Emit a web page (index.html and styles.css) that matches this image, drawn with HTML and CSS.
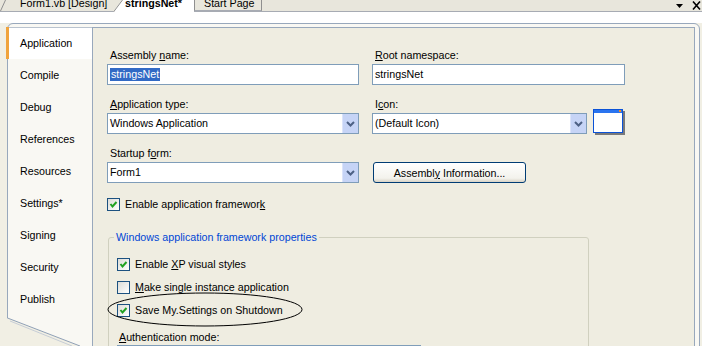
FILE: index.html
```html
<!DOCTYPE html>
<html lang="en">
<head>
  <meta charset="UTF-8">
  <title>stringsNet - Application</title>
  <link rel="stylesheet" href="styles.css">
</head>
<body>

  <div class="docbar">
    <span class="slant lead"><svg width="6" height="12"><path d="M0.5 11 L5.5 0" stroke="#8f8f8f" fill="none"/></svg></span>
    <div class="doctab design">Form1.vb [Design]</div>
    <span class="slant"><svg width="10" height="12"><path d="M0 12 L9 0 L10 0 L10 12Z" fill="#fff"/><path d="M0.5 12 L9.5 0" stroke="#8f8f8f" fill="none"/></svg></span>
    <div class="doctab active">stringsNet*</div>
    <div class="doctab start">Start Page</div>
    <div class="docbtns">
      <svg width="28" height="10">
        <path d="M2 3 L9 3 L5.5 7Z" fill="#000"/>
        <path d="M19 0.5 L26 8.5 M26 0.5 L19 8.5" stroke="#000" stroke-width="1.6" fill="none"/>
      </svg>
    </div>
  </div>
  <div class="strip"></div>

  <div class="frame">
    <ul class="sidetabs">
      <li class="sel">Application</li>
      <li>Compile</li>
      <li>Debug</li>
      <li>References</li>
      <li>Resources</li>
      <li>Settings*</li>
      <li>Signing</li>
      <li>Security</li>
      <li>Publish</li>
    </ul>

    <div class="panel">
      <div class="grid">
        <div class="field">
          <div class="label">Assembly <u>n</u>ame:</div>
          <div class="textbox"><span class="picked">stringsNet</span></div>
        </div>
        <div class="field">
          <div class="label"><u>R</u>oot namespace:</div>
          <div class="textbox">stringsNet</div>
        </div>

        <div class="field">
          <div class="label"><u>A</u>pplication type:</div>
          <div class="combo"><span class="value">Windows Application</span><span class="drop"><svg width="9" height="6"><path d="M1 1 L4.5 4.5 L8 1" stroke="#4d6185" stroke-width="2" fill="none"/></svg></span></div>
        </div>
        <div class="field">
          <div class="label">I<u>c</u>on:</div>
          <div class="iconrow">
            <div class="combo short"><span class="value">(Default Icon)</span><span class="drop"><svg width="9" height="6"><path d="M1 1 L4.5 4.5 L8 1" stroke="#4d6185" stroke-width="2" fill="none"/></svg></span></div>
            <svg class="preview" width="32" height="26">
              <rect x="2" y="2" width="30" height="24" fill="#7a7a7a"/>
              <rect x="0.5" y="0.5" width="29" height="23" fill="#fff" stroke="#0b52d6"/>
              <rect x="1" y="1" width="28" height="3" fill="#2a74ef"/>
              <rect x="26" y="1" width="2" height="2" fill="#f28c28"/>
            </svg>
          </div>
        </div>

        <div class="field">
          <div class="label">Startup f<u>o</u>rm:</div>
          <div class="combo"><span class="value">Form1</span><span class="drop"><svg width="9" height="6"><path d="M1 1 L4.5 4.5 L8 1" stroke="#4d6185" stroke-width="2" fill="none"/></svg></span></div>
        </div>
        <div class="field">
          <div class="label"></div>
          <button class="xpbutton">Assembl<u>y</u> Information...</button>
        </div>
      </div>

      <div class="check framework">
        <span class="box on"><svg width="11" height="11"><path d="M2.5 5 L4.5 7.5 L8.5 3" stroke="#21a121" stroke-width="2" fill="none"/></svg></span>
        <span>Enable application framewor<u>k</u></span>
      </div>

      <fieldset class="group">
        <legend>Windows application framework properties</legend>
        <div class="check">
          <span class="box on"><svg width="11" height="11"><path d="M2.5 5 L4.5 7.5 L8.5 3" stroke="#21a121" stroke-width="2" fill="none"/></svg></span>
          <span>Enable <u>X</u>P visual styles</span>
        </div>
        <div class="check">
          <span class="box"></span>
          <span><u>M</u>ake single instance application</span>
        </div>
        <div class="check">
          <span class="box on"><svg width="11" height="11"><path d="M2.5 5 L4.5 7.5 L8.5 3" stroke="#21a121" stroke-width="2" fill="none"/></svg></span>
          <span>Save My.Settings on Shutdown</span>
        </div>
        <div class="label auth"><u>A</u>uthentication mode:</div>
        <div class="textbox auth-box"></div>
      </fieldset>
    </div>
  </div>

  <!-- hand-drawn ring around the shutdown option -->
  <svg class="ring" width="200" height="38">
    <ellipse cx="99" cy="18.5" rx="97" ry="16.5" fill="none" stroke="#000"/>
  </svg>

  <!-- slanted bottom of the side tab strip -->
  <svg class="corner" width="96" height="30">
    <path d="M0 2 L7 2 L80 30 L0 30Z" fill="#f1efe4"/>
    <path d="M7.5 2 L80 30" stroke="#8fa0b6" fill="none"/>
    <path d="M10 5 L72 30" stroke="#c6cdd6" fill="none"/>
  </svg>

</body>
</html>
```

FILE: styles.css
```css
* {
  box-sizing: border-box;
}

body {
  margin: 0;
  width: 702px;
  height: 346px;
  overflow: hidden;
  position: relative;
  font-family: 'Liberation Sans', Arial, sans-serif;
  font-size: 10.7px;
  color: #000;
  background: #f1efe4;
}

u {
  text-decoration-thickness: 1px;
  text-underline-offset: 1px;
}

/* document tabs */
.docbar {
  height: 12px;
  display: flex;
  align-items: flex-start;
  background: linear-gradient(to top, #a7abb3 1px, #e8e6dc 1px);
  overflow: hidden;
}

.slant {
  height: 12px;
  display: block;
}

.slant svg {
  display: block;
}

.slant.lead {
  width: 6px;
}

.doctab {
  height: 12px;
  line-height: 13px;
  margin-top: -3px;
  white-space: nowrap;
}

.doctab.design {
  width: 107px;
  padding-left: 14px;
}

.doctab.active {
  width: 71px;
  height: 15px;
  background: #fff;
  font-weight: bold;
  padding-left: 2px;
}

.doctab.start {
  width: 68px;
  height: 14px;
  padding-left: 9px;
  border-left: 1px solid #8f8f8f;
  border-right: 1px solid #8f8f8f;
  border-bottom: 1px solid #a7abb3;
}

.docbtns {
  margin-left: auto;
  padding-top: 1px;
}

.docbtns svg {
  display: block;
}

.strip {
  height: 11px;
  background: #fff;
}

/* property page frame */
.frame {
  margin-left: 7px;
  width: 693px;
  height: 340px;
  border: 1px solid #98a8bc;
  border-radius: 6px 6px 0 0;
  background: #f9f8f3;
  display: flex;
  padding: 3px 4px 0 0;
}

.sidetabs {
  list-style: none;
  margin: 0;
  padding: 0;
  width: 84px;
  flex-shrink: 0;
}

.sidetabs li {
  height: 32px;
  line-height: 32px;
  padding-left: 12px;
}

.sidetabs li.sel {
  background: #fff;
  margin-left: -2px;
  padding-left: 11px;
  border-left: 3px solid #f0a33c;
  box-shadow: inset 0 1px #b9c3cf;
}

.panel {
  flex: 1;
  background: #efede1;
  border: 1px solid #98a8bc;
  border-bottom: none;
  padding: 21px 0 0 14px;
}

.grid {
  display: grid;
  grid-template-columns: 252px 253px;
  column-gap: 13px;
  row-gap: 13px;
}

.label {
  height: 13px;
  line-height: 13px;
  padding-left: 3px;
  margin-bottom: 2px;
}

.textbox,
.combo {
  height: 21px;
  border: 1px solid #7f9db9;
  background: #fff;
  line-height: 19px;
  padding-left: 2px;
  white-space: nowrap;
}

.picked {
  display: inline-block;
  line-height: 13px;
  padding: 0 1px;
  background: #316ac5;
  color: #fff;
}

.combo {
  display: flex;
  padding-right: 0;
}

.combo .value {
  flex: 1;
}

.combo .drop {
  width: 16px;
  height: 19px;
  background: #c6d4f6;
  border-left: 1px solid #dbe4fb;
  display: flex;
  align-items: center;
  justify-content: center;
}

.combo .drop svg {
  display: block;
}

.iconrow {
  display: flex;
  align-items: center;
  height: 21px;
}

.combo.short {
  width: 215px;
}

.preview {
  display: block;
  margin-left: 6px;
  margin-top: -3px;
}

.xpbutton {
  display: block;
  width: 153px;
  height: 21px;
  margin: 1px 0 0 1px;
  padding: 0;
  border: 1px solid #003c74;
  border-radius: 3px;
  background: linear-gradient(#ffffff, #f3f2ec 80%, #d8d3c6);
  font: inherit;
  color: #000;
}

/* check boxes */
.check {
  display: flex;
  align-items: center;
  height: 13px;
  line-height: 13px;
  margin-top: 10px;
  white-space: nowrap;
}

.check.framework {
  margin-top: 15px;
}

.box {
  width: 13px;
  height: 13px;
  border: 1px solid #1c5180;
  background: linear-gradient(135deg, #dcdcd7, #fff);
  margin-right: 5px;
  flex-shrink: 0;
}

.box svg {
  display: block;
}

.group {
  margin: 20px 0 0 1px;
  width: 481px;
  border: 1px solid #d0d0bf;
  border-radius: 3px;
  padding: 4px 8px 0;
  min-width: 0;
}

.group legend {
  color: #0046d5;
  padding: 0 2px;
  margin-left: -3px;
  line-height: 13px;
}

.group .check:first-of-type {
  margin-top: 10px;
}

.label.auth {
  margin-top: 14px;
  padding-left: 2px;
}

.auth-box {
  width: 304px;
  margin-top: -1px;
}

/* overlays */
.ring {
  position: absolute;
  left: 106px;
  top: 291px;
}

.corner {
  position: absolute;
  left: 0;
  top: 316px;
}
```
